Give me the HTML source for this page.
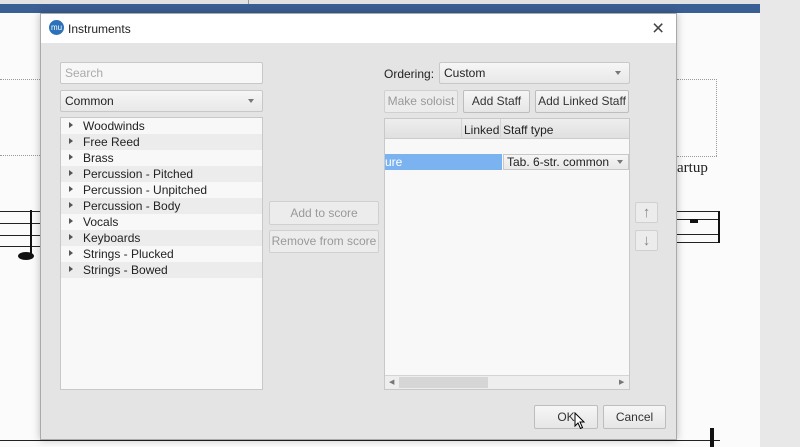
<!DOCTYPE html>
<html><head><style>
*{box-sizing:border-box;margin:0;padding:0}
body{width:800px;height:447px;overflow:hidden;background:#fbfbfb;font-family:"Liberation Sans",sans-serif;font-size:12px;color:#222;position:relative}
.a{position:absolute}
.btn{position:absolute;border:1px solid #bdbdbd;border-radius:2px;background:linear-gradient(#f6f6f6,#e6e6e6);text-align:center;line-height:20px;font-size:12px;color:#333}
.dis{color:#999;background:#ececec;border-color:#d0d0d0}
.field{position:absolute;background:#f7f7f7;border:1px solid #c8c8c8;border-radius:2px;line-height:20px;padding-left:4px}
.arr{position:absolute;right:8px;top:8px;width:0;height:0;border-left:3px solid transparent;border-right:3px solid transparent;border-top:4px solid #777}
.row{height:16px;line-height:16px;padding-left:22px;position:relative}
.row:nth-child(even){background:#ececec}
.row:before{content:"";position:absolute;left:8px;top:4px;border-top:3.5px solid transparent;border-bottom:3.5px solid transparent;border-left:4px solid #555}
</style></head><body>
<div class="a" style="left:0;top:0;width:760px;height:4px;background:#e2e2e2"></div>
<div class="a" style="left:0;top:4px;width:760px;height:9px;background:#3a5f94"></div>
<div class="a" style="left:248px;top:0;width:1px;height:4px;background:#999"></div>
<div class="a" style="left:760px;top:0;width:40px;height:447px;background:#e8e8e8"></div>
<div class="a" style="left:0;top:79px;width:40px;border-top:1px dotted #999"></div>
<div class="a" style="left:0;top:155px;width:40px;border-top:1px dotted #999"></div>
<div class="a" style="left:677px;top:79px;width:40px;border-top:1px dotted #999"></div>
<div class="a" style="left:716px;top:79px;height:77px;border-left:1px dotted #999"></div>
<div class="a" style="left:677px;top:156px;width:40px;border-top:1px dotted #999"></div>
<div class="a" style="left:677px;top:160px;font-family:'Liberation Serif',serif;font-size:15px">artup</div>
<div class="a" style="left:0;top:211px;width:40px;height:36px;border-top:1px solid #222;border-bottom:1px solid #222"><div style="margin-top:11px;border-top:1px solid #222;border-bottom:1px solid #222;height:13px"></div></div>
<div class="a" style="left:30px;top:210px;width:2px;height:46px;background:#111"></div>
<div class="a" style="left:18px;top:252px;width:16px;height:8px;border-radius:50%;background:#111"></div>
<div class="a" style="left:677px;top:211px;width:43px;height:32px;border-top:1px solid #222;border-bottom:1px solid #222"><div style="margin-top:7px;border-top:1px solid #222;border-bottom:1px solid #222;height:16px"></div></div>
<div class="a" style="left:718px;top:211px;width:2px;height:32px;background:#111"></div>
<div class="a" style="left:690px;top:219px;width:8px;height:4px;background:#111"></div>
<div class="a" style="left:0;top:440px;width:720px;border-top:1px solid #222"></div>
<div class="a" style="left:710px;top:428px;width:4px;height:19px;background:#111"></div>
<div class="a" style="left:40px;top:13px;width:637px;height:427px;background:#e4e4e4;border:1px solid #aaa;box-shadow:0 0 8px rgba(0,0,0,.25)">
<div class="a" style="left:0;top:0;width:635px;height:29px;background:#fff"></div>
<div class="a" style="left:8px;top:6px;width:15px;height:15px;border-radius:50%;background:#2b72b8;color:#fff;font-size:8px;line-height:15px;text-align:center">mu</div>
<div class="a" style="left:27px;top:8px;font-size:12px">Instruments</div>
<div class="a" style="left:611px;top:3px;font-size:21px;font-weight:100;color:#444">×</div>
</div>
<div class="field" style="left:60px;top:62px;width:203px;height:22px;color:#aaa">Search</div>
<div class="field" style="left:60px;top:90px;width:203px;height:22px;background:linear-gradient(#f6f6f6,#e8e8e8)">Common<div class="arr"></div></div>
<div class="a" style="left:60px;top:117px;width:203px;height:273px;background:#f8f8f8;border:1px solid #c8c8c8">
<div class="row">Woodwinds</div><div class="row">Free Reed</div><div class="row">Brass</div><div class="row">Percussion - Pitched</div><div class="row">Percussion - Unpitched</div><div class="row">Percussion - Body</div><div class="row">Vocals</div><div class="row">Keyboards</div><div class="row">Strings - Plucked</div><div class="row">Strings - Bowed</div>
</div>
<div class="btn dis" style="left:269px;top:201px;width:110px;height:24px;line-height:22px">Add to score</div>
<div class="btn dis" style="left:269px;top:230px;width:110px;height:23px;line-height:21px">Remove from score</div>
<div class="a" style="left:384px;top:67px">Ordering:</div>
<div class="field" style="left:439px;top:62px;width:191px;height:22px;background:linear-gradient(#f6f6f6,#e8e8e8)">Custom<div class="arr"></div></div>
<div class="btn dis" style="left:384px;top:90px;width:74px;height:23px">Make soloist</div>
<div class="btn" style="left:463px;top:90px;width:67px;height:23px">Add Staff</div>
<div class="btn" style="left:535px;top:90px;width:94px;height:23px">Add Linked Staff</div>
<div class="a" style="left:384px;top:118px;width:246px;height:272px;background:#f8f8f8;border:1px solid #c8c8c8">
<div class="a" style="left:0;top:0;width:244px;height:20px;background:linear-gradient(#eee,#e0e0e0);border-bottom:1px solid #ccc"></div>
<div class="a" style="left:76px;top:0;height:20px;border-left:1px solid #d4d4d4"></div>
<div class="a" style="left:115px;top:0;height:20px;border-left:1px solid #d4d4d4"></div>
<div class="a" style="left:79px;top:4px">Linked</div>
<div class="a" style="left:118px;top:4px">Staff type</div>
<div class="a" style="left:0;top:35px;width:117px;height:16px;background:#7ab3ef;color:#fff;line-height:16px">ure</div>
<div class="a" style="left:118px;top:35px;width:126px;height:16px;border:1px solid #c8c8c8;background:linear-gradient(#f6f6f6,#e8e8e8);line-height:14px;padding-left:3px">Tab. 6-str. common<div class="arr" style="top:5px;right:5px"></div></div>
<div class="a" style="left:0;top:256px;width:244px;height:14px;background:#eee;border-top:1px solid #d4d4d4"></div>
<div class="a" style="left:14px;top:258px;width:89px;height:11px;background:#d6d6d6"></div>
<div class="a" style="left:4px;top:259px;font-size:7px;color:#777">◀</div>
<div class="a" style="left:234px;top:259px;font-size:7px;color:#777">▶</div>
</div>
<div class="btn dis" style="left:635px;top:202px;width:23px;height:21px;color:#888;line-height:19px;font-size:15px">↑</div>
<div class="btn dis" style="left:635px;top:230px;width:23px;height:21px;color:#888;line-height:19px;font-size:15px">↓</div>
<div class="btn" style="left:534px;top:405px;width:64px;height:24px;line-height:22px">OK</div>
<div class="btn" style="left:603px;top:405px;width:63px;height:24px;line-height:22px">Cancel</div>
<svg class="a" style="left:574px;top:412px" width="12" height="18" viewBox="0 0 12 18"><path d="M1 1 L1 14 L4 11 L6.5 16.5 L8.5 15.5 L6 10 L10 10 Z" fill="#fff" stroke="#000" stroke-width="1"/></svg>
</body></html>
